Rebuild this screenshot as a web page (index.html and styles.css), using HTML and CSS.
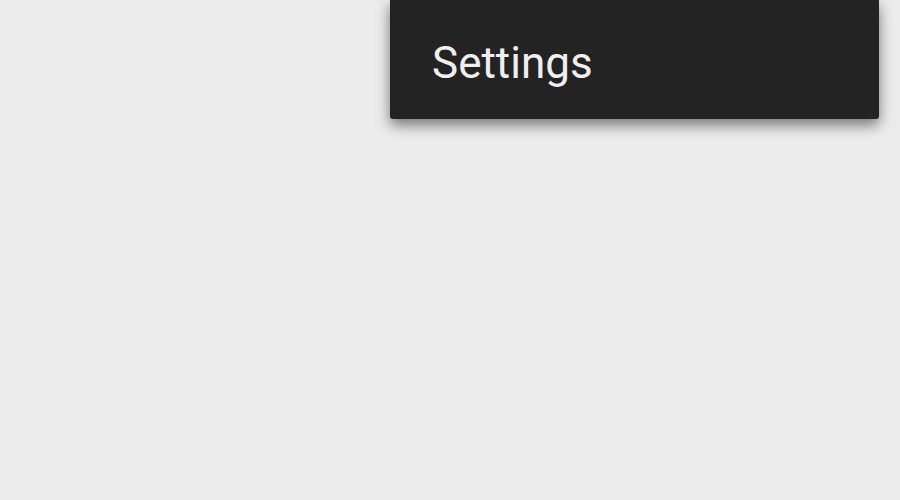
FILE: index.html
```html
<!DOCTYPE html>
<html>
<head>
<meta charset="utf-8">
<link rel="stylesheet" href="styles.css">
</head>
<body>
<div class="screen">
  <div class="overflow-row">
    <div class="menu">
      <div class="menu-item">Settings</div>
    </div>
  </div>
</div>
</body>
</html>
```
FILE: styles.css
```css
html, body {
  margin: 0;
  padding: 0;
  background: #ececec;
}
.screen {
  width: 900px;
  height: 500px;
  background: #ececec;
  font-family: Roboto, "Noto Sans", sans-serif;
}
.overflow-row {
  display: flex;
  justify-content: flex-end;
  padding-right: 21px;
}
.menu {
  width: 489px;
  height: 119px;
  box-sizing: border-box;
  background: #232323;
  border-radius: 0 0 3px 3px;
  box-shadow: 0 6px 14px rgba(0, 0, 0, 0.5);
  padding: 41px 0 0 42px;
}
.menu-item {
  color: #efefef;
  font-size: 44px;
  line-height: 44px;
}
```
